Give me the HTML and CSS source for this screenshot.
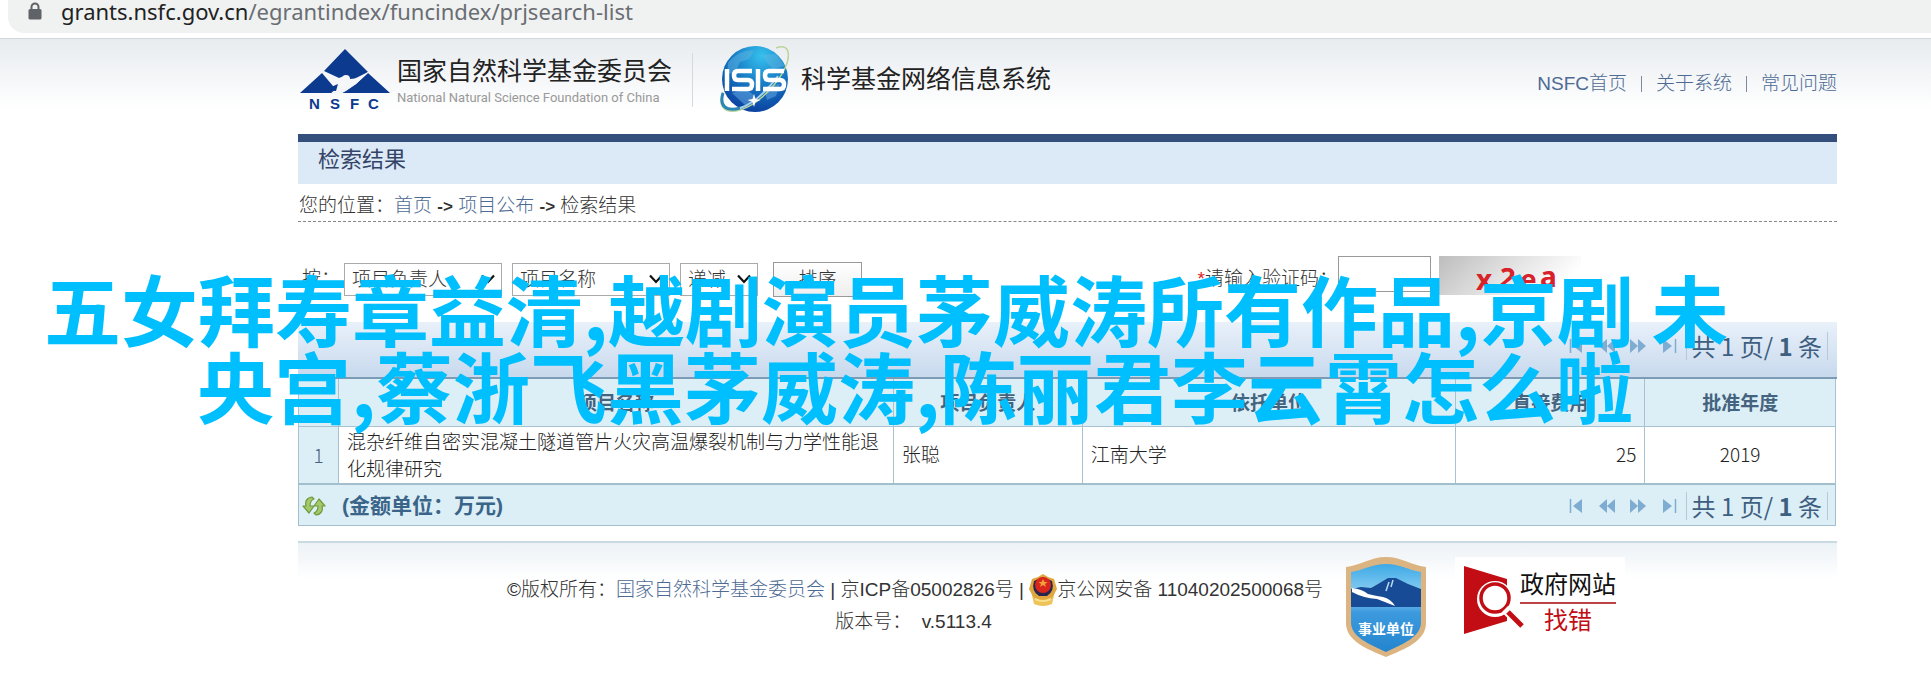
FILE: index.html
```html
<!DOCTYPE html>
<html lang="zh-CN">
<head>
<meta charset="utf-8">
<title>检索结果</title>
<link rel="stylesheet" href="styles.css">
</head>
<body>
<svg class="defs" width="0" height="0" aria-hidden="true">
  <symbol id="first" viewBox="0 0 18 16"><path d="M3.500 1v14" stroke="currentColor" stroke-width="1.500"/><path d="M15 1v14L6 8z" fill="currentColor"/></symbol>
  <symbol id="prev" viewBox="0 0 18 16"><path d="M9 1v14L1 8zM17 1v14L9 8z" fill="currentColor"/></symbol>
  <symbol id="next" viewBox="0 0 18 16"><path d="M1 1v14l8-7zM9 1v14l8-7z" fill="currentColor"/></symbol>
  <symbol id="last" viewBox="0 0 18 16"><path d="M3 1v14l9-7z" fill="currentColor"/><path d="M15.500 1v14" stroke="currentColor" stroke-width="1.500"/></symbol>
  <symbol id="chev" viewBox="0 0 14 10"><path d="M1 1.500l6 6.500 6-6.500" fill="none" stroke="#111" stroke-width="2.200"/></symbol>
</svg>

<div class="address">
  <svg class="lock" viewBox="0 0 14 18"><path d="M3.500 8V5a3.500 3.500 0 0 1 7 0v3" fill="none" stroke="#5f6368" stroke-width="2"/><rect x="0.500" y="7" width="13" height="10.500" rx="1.500" fill="#5f6368"/></svg>
  <span class="url"><b>grants.nsfc.gov.cn</b>/egrantindex/funcindex/prjsearch-list</span>
</div>

<div class="page">
  <div class="wrap">
    <header class="header">
      <svg class="nsfc" viewBox="0 0 90 64">
        <path d="M45 0L68 23 60 29 50 30 44 27 39 29 24 22z" fill="#0c3a8e"/>
        <path d="M22 24L33 37 38 44H0z" fill="#0c3a8e"/>
        <path d="M68 24L90 44H42L56 35z" fill="#0c3a8e"/>
        <path d="M23 21L35 33 42 37 52 31 70 22 56 35 46 42 40 45H30L38 38z" fill="#f4f6f9"/>
        <circle cx="46" cy="30" r="4" fill="#f4f6f9"/>
        <path d="M24 41l14-6-2 7z" fill="#0c3a8e"/>
        <g class="nsfc-text"><text x="9" y="60">N</text><text x="30" y="60">S</text><text x="50" y="60">F</text><text x="68" y="60">C</text></g>
      </svg>
      <div class="org"><span class="org-cn">国家自然科学基金委员会</span><span class="org-en">National Natural Science Foundation of China</span></div>
      <svg class="isis" viewBox="0 0 72 72">
        <defs><radialGradient id="globe" cx="0.600" cy="0.150" r="0.900"><stop offset="0" stop-color="#35c1ee"/><stop offset="0.500" stop-color="#1679c4"/><stop offset="1" stop-color="#0a3c9c"/></radialGradient></defs>
        <circle cx="35" cy="36" r="33" fill="url(#globe)"/>
        <path d="M8 20C15 10 28 6 34 8l-5 8-9 3-4 9-9 4zM42 12l14-1 9 12-12 3-6-6z" fill="#5fb6e2" opacity="0.500"/>
        <path d="M12 50l14-4 9 7-8 11zM44 44l16-3-4 12-9 4z" fill="#5b9fdc" opacity="0.600"/>
        <path d="M3 49C-3 64 5 71 20 67 43 60 72 26 68 9 67 3 61 3 56 5" fill="none" stroke="#b9d59a" stroke-width="1.500"/>
        <path d="M3 50C-1 63 6 69 20 65" fill="none" stroke="#2c86b5" stroke-width="3"/>
        <path d="M20 65C34 61 48 46 58 33" fill="none" stroke="#a5d3ec" stroke-width="2"/>
        <g fill="none" stroke="#fff" stroke-width="4.500" stroke-linejoin="round"><path d="M7 26V48M38 26V48"/><path d="M32 28H18q-4 0-4 4.500t4 4.500h10q4 0 4 4.500t-4 4.500H12"/><path d="M64 28H49q-4 0-4 4.500t4 4.500h11q4 0 4 4.500t-4 4.500H43"/></g>
        <path d="M34 51l1.500 5 5 1-5 2-1.500 5-1.500-5-5-2 5-1z" fill="#fff"/>
      </svg>
      <span class="system">科学基金网络信息系统</span>
      <nav class="nav"><a href="#">NSFC首页</a><i></i><a href="#">关于系统</a><i></i><a href="#">常见问题</a></nav>
    </header>

    <h1 class="title">检索结果</h1>
    <div class="crumbs">您的位置：<a href="#">首页</a> <b>-&gt;</b> <a href="#">项目公布</a> <b>-&gt;</b> 检索结果</div>

    <form class="sort">
      <label class="by" for="s1">按：</label>
      <span class="sel wide"><select id="s1"><option>项目负责人</option></select><svg><use href="#chev"/></svg></span>
      <span class="sel wide"><select aria-label="排序字段"><option>项目名称</option></select><svg><use href="#chev"/></svg></span>
      <span class="sel"><select aria-label="顺序"><option>递减</option></select><svg><use href="#chev"/></svg></span>
      <button class="go" type="button">排序</button>
      <label class="code-label" for="code"><em>*</em>请输入验证码：</label>
      <input class="code" id="code" type="text">
      <svg class="captcha" viewBox="0 0 142 39"><defs><linearGradient id="cap" x2="1" y2="0.300"><stop offset="0" stop-color="#bdbdbd"/><stop offset="0.600" stop-color="#e6e6e6"/><stop offset="1" stop-color="#fff"/></linearGradient></defs><rect width="142" height="39" fill="url(#cap)"/><g class="cap-text"><text x="37" y="34">x</text><text x="60" y="32" transform="rotate(6 68 25)">2</text><text x="81" y="34">e</text><text x="101" y="31">a</text></g></svg>
    </form>

    <section class="grid">
      <div class="bar top">
        <div class="pager"><button type="button" aria-label="首页"><svg><use href="#first"/></svg></button><button type="button" aria-label="上一页"><svg><use href="#prev"/></svg></button><button type="button" aria-label="下一页"><svg><use href="#next"/></svg></button><button type="button" aria-label="末页"><svg><use href="#last"/></svg></button><span class="count">共 1 页/ <b>1</b> 条</span></div>
      </div>
      <table class="table">
        <colgroup><col class="c1"><col class="c2"><col class="c3"><col class="c4"><col class="c5"><col class="c6"></colgroup>
        <thead><tr><th></th><th>项目名称</th><th>项目负责人</th><th>依托单位</th><th>直接费用</th><th>批准年度</th></tr></thead>
        <tbody><tr><td class="num">1</td><td>混杂纤维自密实混凝土隧道管片火灾高温爆裂机制与力学性能退化规律研究</td><td>张聪</td><td>江南大学</td><td class="fee">25</td><td class="year">2019</td></tr></tbody>
      </table>
      <div class="bar bottom">
        <svg class="refresh" viewBox="0 0 24 20"><g fill="#a4c968" stroke="#6f9a3e" stroke-width="1.200" stroke-linejoin="round"><path d="M10 1C4 2 3 6 4 10H1l6 7 5-7H8C8 6 9 4 12 3z"/><path d="M14 19c6-1 7-5 6-9h3l-6-7-5 7h4c0 4-1 6-4 7z"/></g></svg>
        <strong class="unit">(金额单位：万元)</strong>
        <div class="pager"><button type="button" aria-label="首页"><svg><use href="#first"/></svg></button><button type="button" aria-label="上一页"><svg><use href="#prev"/></svg></button><button type="button" aria-label="下一页"><svg><use href="#next"/></svg></button><button type="button" aria-label="末页"><svg><use href="#last"/></svg></button><span class="count">共 1 页/ <b>1</b> 条</span></div>
      </div>
    </section>

    <footer class="footer">
      <div class="legal">
        <div class="line">©版权所有：<a href="#">国家自然科学基金委员会</a> | 京ICP备05002826号 | <svg class="police" viewBox="0 0 28 32"><path d="M2 17l3 13q9 4 18 0l3-13z" fill="#edc35a"/><path d="M14 0l5 3 6 2 3 10-5 9-9 3-9-3-5-9L3 5l6-2z" fill="#e0a83c"/><path d="M14 3l9 4q3 10-5 15h-8Q2 17 5 7z" fill="#27264f"/><circle cx="14" cy="11" r="8" fill="#d9251c"/><path d="M14 5l1.500 3h3l-2.500 2 1 3-3-2-3 2 1-3-2.500-2h3z" fill="#f0a13a"/><path d="M6 25q8 4 16 0" fill="none" stroke="#fae08c" stroke-width="2"/></svg>京公网安备 11040202500068号</div>
        <div class="line">版本号：&nbsp; v.5113.4</div>
      </div>
      <svg class="badge" viewBox="0 0 82 100">
        <defs><linearGradient id="sky" x2="0" y2="1"><stop offset="0" stop-color="#3da9e6"/><stop offset="0.350" stop-color="#8fd0f2"/><stop offset="0.550" stop-color="#3d9ade"/><stop offset="1" stop-color="#2385cf"/></linearGradient></defs>
        <path d="M41 0C57 0 65 8 81 10V66C81 84 60 92 41 100 22 92 1 84 1 66V10C17 8 25 0 41 0z" fill="#dcb481"/>
        <path d="M41 7C55 7 63 13 76 15V65C76 80 58 87 41 95 24 87 6 80 6 65V15C19 13 27 7 41 7z" fill="url(#sky)"/>
        <path d="M6 32l10-2 10 1 7-4 10-6 8 0 12 6 13 5v18H6z" fill="#174b96"/>
        <path d="M7 31q10 1 16 6 8 2 15 3 8 2 12 9-10-4-18-7-14-1-25-7z" fill="#fff"/><path d="M44 25l-3 9M48 23l-2 7" stroke="#b8dced" stroke-width="1.500"/>
        <text x="41" y="77" class="badge-text">事业单位</text>
      </svg>
      <div class="report">
        <svg class="glass" viewBox="0 0 60 68"><path d="M0 0l43 13v42L0 68z" fill="#c10d13"/><circle cx="31" cy="33" r="18" fill="#fff"/><circle cx="31" cy="32" r="14" fill="none" stroke="#c10d13" stroke-width="3.500"/><path d="M41 43l18 18" stroke="#fff" stroke-width="9"/><path d="M44 46l14 14" stroke="#c10d13" stroke-width="5"/></svg>
        <div class="report-text"><span class="gov">政府网站</span><span class="err">找错</span></div>
      </div>
    </footer>
  </div>
</div>
<div class="caption"><p>五女拜寿章益清,越剧演员茅威涛所有作品,京剧 未</p><p class="second">央宫,蔡浙飞黑茅威涛,陈丽君李云霄怎么啦</p></div>
</body>
</html>
```
FILE: styles.css
```css
* { box-sizing: border-box; }
body { margin: 0; background: #fff; color: #333; font: 300 19px/28px "Liberation Sans", "Noto Sans CJK SC", sans-serif; position: relative; overflow-x: hidden; }
a { color: #4d6a94; text-decoration: none; }
.defs { position: absolute; }

.address { margin-left: 8px; height: 33px; padding: 0 20px 12px; background: #f0f2f2; border-bottom-left-radius: 16px; display: flex; align-items: center; gap: 19px; }
.lock { width: 14px; height: 18px; }
.url { font: 400 22px/24px "Noto Sans", sans-serif; color: #6a6d72; }
.url b { font-weight: 400; color: #222; }

.page { margin-top: 5px; border-top: 1px solid #d3d7da; background: linear-gradient(#e9ecee, #eef1f4 20px, #fff 70px); }
.wrap { margin: 0 94px 0 298px; }

.header { height: 95px; display: flex; align-items: flex-start; }
.nsfc { width: 90px; height: 64px; margin: 10px 0 0 2px; overflow: visible; }
.nsfc-text { font: 700 15px "Liberation Sans", sans-serif; fill: #0c3a8e; }
.org { margin: 14px 27px 0 7px; display: flex; flex-direction: column; border-right: 1px solid #d5d8dc; padding-right: 20px; }
.org-cn { font-weight: 400; font-size: 25px; line-height: 36px; color: #222; }
.org-en { font: 400 13px/18px Roboto, sans-serif; color: #999; }
.isis { width: 72px; height: 72px; margin-top: 4px; }
.system { margin: 22px 0 0 9px; font-weight: 400; font-size: 25px; line-height: 36px; color: #222; }
.nav { margin: 31px 0 0 auto; display: flex; align-items: center; }
.nav i { width: 1px; height: 16px; background: #7d8aa0; margin: 0 14px; }

.title { margin: 0; border-top: 8px solid #344f7c; background: #dce9f6; padding: 0 20px; font-size: 22px; font-weight: 400; line-height: 36px; height: 50px; color: #344468; }
.crumbs { height: 38px; padding: 8px 1px 0; border-bottom: 1px dashed #888; white-space: nowrap; }
.crumbs b { font-size: 17px; font-weight: 700; }

.sort { height: 100px; padding: 34px 0 0 4px; display: flex; align-items: flex-start; }
.by { width: 42px; padding-top: 9px; }
.sel { position: relative; width: 78px; margin: 7px 10px 0 0; }
.sel.wide { width: 158px; }
.sel select { appearance: none; width: 100%; height: 33px; border: 1px solid #aaa; background: #fff; padding: 0 7px; font: inherit; color: #333; }
.sel svg { position: absolute; right: 7px; top: 11px; width: 14px; height: 10px; pointer-events: none; }
.go { width: 89px; height: 35px; margin: 6px 0 0 5px; border: 1px solid #999; background: linear-gradient(#fff, #eee); font: inherit; color: #333; padding: 0; }
.code-label { margin: 9px 0 0 auto; white-space: nowrap; }
.code-label em { color: #d22; font-style: normal; }
.code { width: 93px; height: 36px; border: 1px solid #999; background: #fff; margin-right: 8px; }
.captcha { width: 142px; height: 39px; margin-right: 256px; }
.cap-text { font: 700 28px "Noto Sans", sans-serif; fill: #d8222a; }

.bar { display: flex; align-items: center; color: #44637f; }
.bar.top { height: 57px; padding-bottom: 8px; background: linear-gradient(#e9f1fa, #c8d9ed); border-bottom: 2px solid #7b9cb4; }
.bar.bottom { height: 43px; background: #dceef6; border: 1px solid #a3bfcd; border-top-width: 2px; padding: 3px 0 0 3px; margin-right: 1px; }
.pager { margin-left: auto; display: flex; align-items: center; padding-right: 7px; }
.top .pager { padding-right: 9px; }
.pager button { width: 18px; height: 16px; padding: 0; border: 0; margin-right: 13px; background: none; color: #7fadd2; }
.pager button:nth-child(4) { margin-right: 8px; }
.pager svg { width: 18px; height: 16px; display: block; }
.count { font: 400 24px/28px "Noto Sans CJK SC", sans-serif; color: #3e5f80; border: solid #b7c9d8; border-width: 0 1px; padding: 0 5px; }
.refresh { width: 24px; height: 20px; }
.unit { font-size: 21px; color: #3a6488; margin-left: 16px; font-weight: 700; }

.table { width: calc(100% - 1px); table-layout: fixed; border-collapse: collapse; font-family: "Noto Sans CJK SC", sans-serif; }
.c1 { width: 2.6%; }
.c2 { width: 36.1%; }
.c3, .c5 { width: 12.3%; }
.c4 { width: 24.3%; }
.c6 { width: 12.4%; }
.table th { height: 47px; padding: 0; background: #dceef6; border: 1px solid #a9c2cf; border-top: 0; color: #44637f; font-weight: 700; }
.table td { height: 56px; padding: 0 8px 2px; line-height: 27px; border: 1px solid #a9c2cf; border-bottom: 0; color: #222; word-break: break-all; }
.table .num { background: #dceef6; color: #44637f; text-align: center; padding: 0; }
.table .fee { text-align: right; }
.table .year { text-align: center; }

.footer { margin-top: 15px; border-top: 2px solid #c9dae2; background: linear-gradient(#edf2f6, #fff 36px); height: 140px; display: flex; align-items: flex-start; padding-left: 209px; }
.legal { width: 813px; padding-top: 31px; text-align: center; line-height: 32px; white-space: nowrap; }
.police { width: 28px; height: 32px; vertical-align: middle; }
.badge { width: 82px; height: 100px; margin: 14px 0 0 25px; }
.badge-text { font: 700 14px "Noto Sans CJK SC", sans-serif; fill: #fff; text-anchor: middle; }
.report { margin: 14px 0 0 28px; padding: 9px; background: #fff; display: flex; }
.glass { width: 60px; height: 68px; }
.report-text { margin-left: -4px; display: flex; flex-direction: column; text-align: center; font-weight: 400; font-size: 24px; line-height: 34px; }
.gov { color: #111; padding-top: 2px; border-bottom: 2px solid #bd4347; }
.err { color: #c10d13; font-weight: 400; }

.caption { position: absolute; left: 44px; top: 269px; color: #00bfff; font: 700 77px/77px "Noto Sans CJK SC", sans-serif; white-space: nowrap; }
.caption p { margin: 0; }
.caption .second { padding-left: 153px; }
```
